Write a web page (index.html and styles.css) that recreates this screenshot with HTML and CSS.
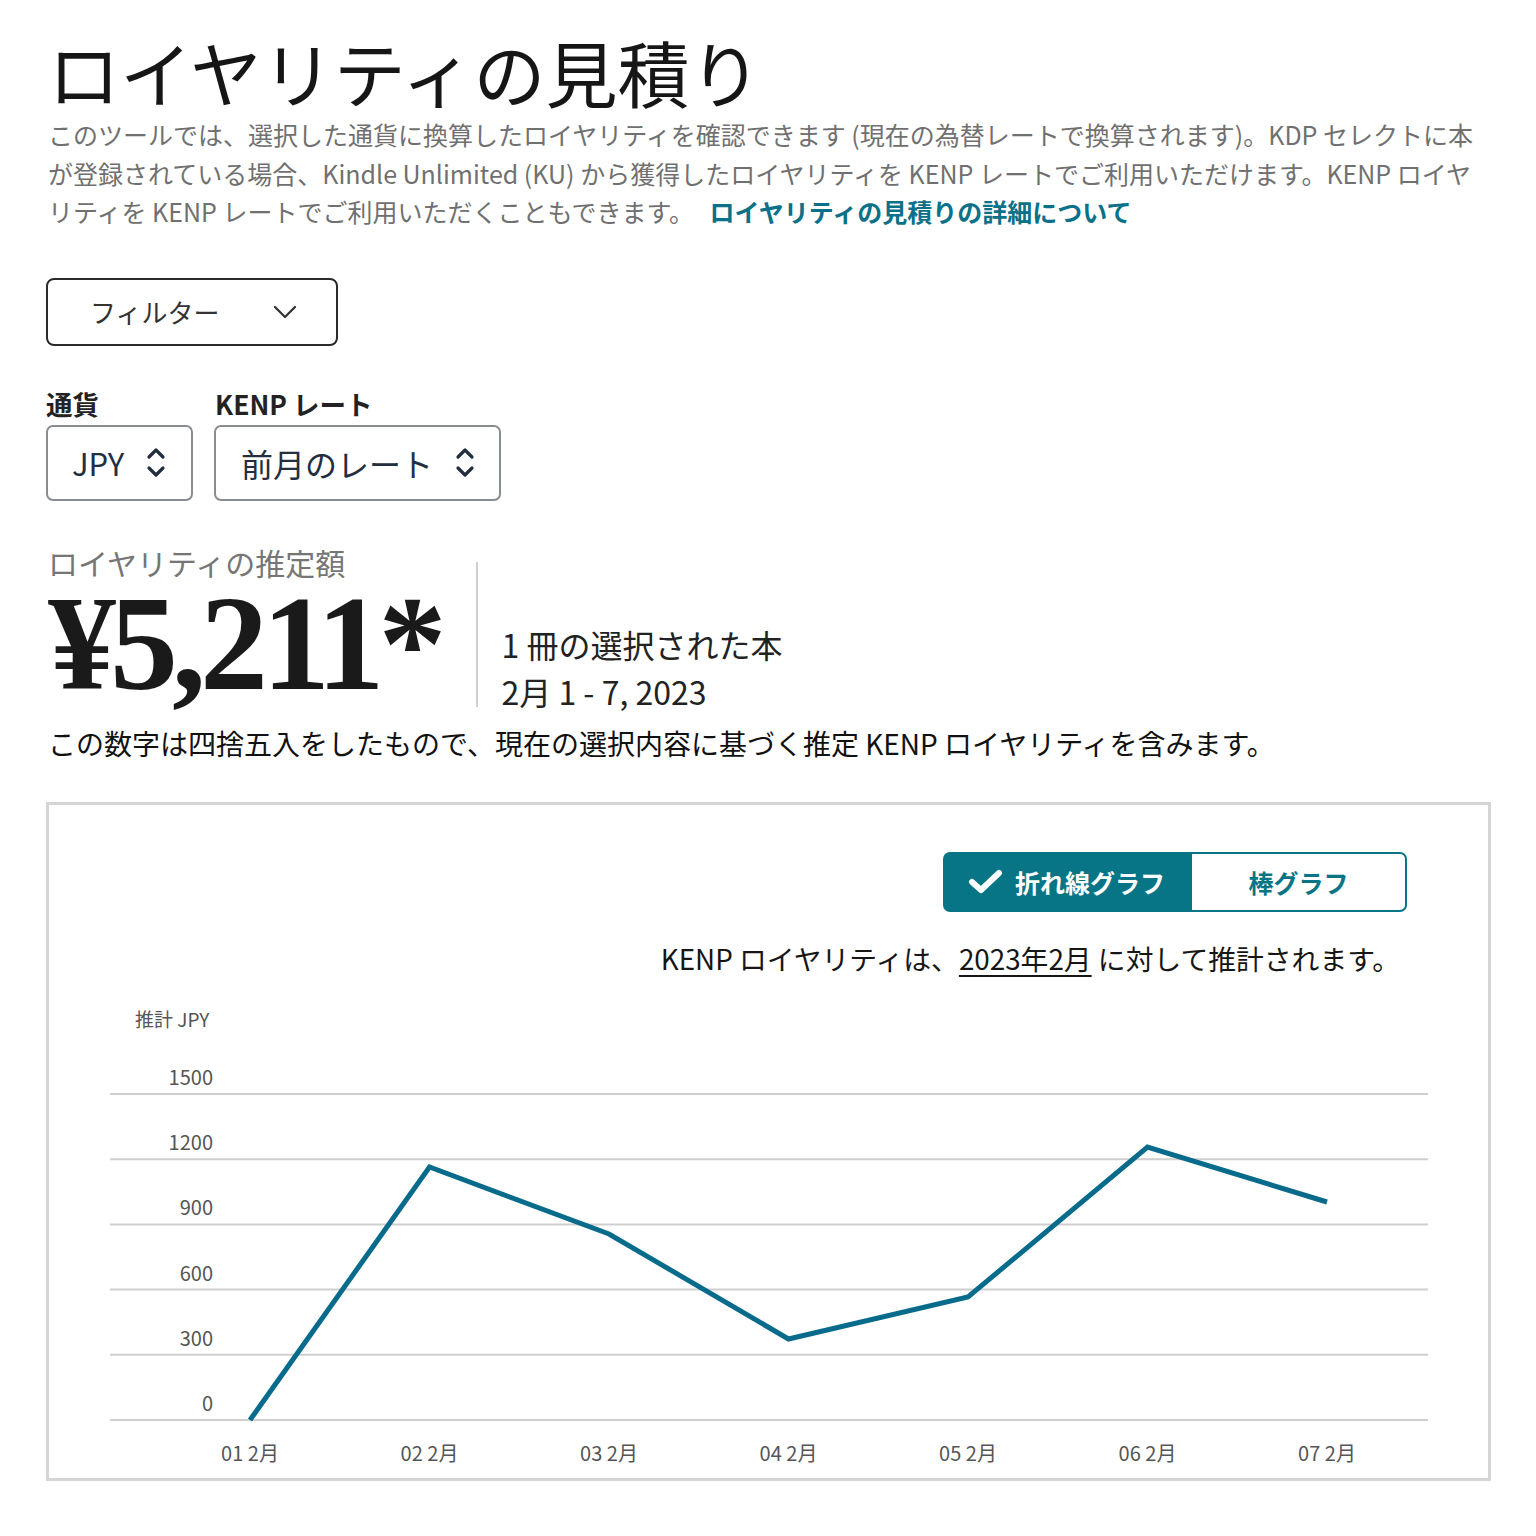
FILE: index.html
```html
<!DOCTYPE html>
<html lang="ja">
<head>
<meta charset="utf-8">
<title>ロイヤリティの見積り</title>
<link rel="stylesheet" href="styles.css">
</head>
<body>
<main class="page">
  <h1 class="title">ロイヤリティの見積り</h1>
  <p class="desc">このツールでは、選択した通貨に換算したロイヤリティを確認できます (現在の為替レートで換算されます)。KDP セレクトに本<br>が登録されている場合、Kindle Unlimited (KU) から獲得したロイヤリティを KENP レートでご利用いただけます。KENP ロイヤ<br>リティを KENP レートでご利用いただくこともできます。 <a class="link" href="#">ロイヤリティの見積りの詳細について</a></p>

  <button class="filter" type="button">
    <span>フィルター</span>
    <svg class="chev" width="24" height="14" viewBox="0 0 24 14"><polyline points="2,2 12,12 22,2" fill="none" stroke="#333" stroke-width="2.3" stroke-linecap="round" stroke-linejoin="round"/></svg>
  </button>

  <div class="selects">
    <div class="field">
      <div class="field-label">通貨</div>
      <div class="select sel-currency">
        <span>JPY</span>
        <svg class="updown" width="20" height="36" viewBox="0 0 20 36"><polyline points="3,12 10,5 17,12" fill="none" stroke="#232f3e" stroke-width="3.2" stroke-linecap="round" stroke-linejoin="round"/><polyline points="3,23 10,30 17,23" fill="none" stroke="#232f3e" stroke-width="3.2" stroke-linecap="round" stroke-linejoin="round"/></svg>
      </div>
    </div>
    <div class="field">
      <div class="field-label">KENP レート</div>
      <div class="select sel-rate">
        <span>前月のレート</span>
        <svg class="updown" width="20" height="36" viewBox="0 0 20 36"><polyline points="3,12 10,5 17,12" fill="none" stroke="#232f3e" stroke-width="3.2" stroke-linecap="round" stroke-linejoin="round"/><polyline points="3,23 10,30 17,23" fill="none" stroke="#232f3e" stroke-width="3.2" stroke-linecap="round" stroke-linejoin="round"/></svg>
      </div>
    </div>
  </div>

  <section class="stat">
    <div class="stat-left">
      <div class="stat-label">ロイヤリティの推定額</div>
      <div class="amount">¥5,211*</div>
    </div>
    <div class="divider"></div>
    <div class="stat-right">
      <div>1 冊の選択された本</div>
      <div>2月 1 - 7, 2023</div>
    </div>
  </section>
  <p class="footnote">この数字は四捨五入をしたもので、現在の選択内容に基づく推定 KENP ロイヤリティを含みます。</p>

  <section class="card">
    <div class="toggle-row">
      <div class="toggle">
        <button class="seg seg-on" type="button">
          <svg width="36" height="26" viewBox="0 0 36 26"><polyline points="4,13 13,21 31,4" fill="none" stroke="#fff" stroke-width="6" stroke-linecap="round" stroke-linejoin="round"/></svg>
          <span>折れ線グラフ</span>
        </button>
        <button class="seg seg-off" type="button">棒グラフ</button>
      </div>
    </div>
    <p class="note">KENP ロイヤリティは、<span class="u">2023年2月</span> に対して推計されます。</p>
    <svg class="chart" width="1439" height="478" viewBox="0 0 1439 478">
      <text class="axis-title" x="86" y="27">推計 JPY</text>
      <g class="grid">
        <line x1="61" x2="1379" y1="94" y2="94"/>
        <line x1="61" x2="1379" y1="159.2" y2="159.2"/>
        <line x1="61" x2="1379" y1="224.4" y2="224.4"/>
        <line x1="61" x2="1379" y1="289.6" y2="289.6"/>
        <line x1="61" x2="1379" y1="354.8" y2="354.8"/>
        <line x1="61" x2="1379" y1="420" y2="420"/>
      </g>
      <g class="ylab">
        <text x="164" y="85">1500</text>
        <text x="164" y="150.2">1200</text>
        <text x="164" y="215.4">900</text>
        <text x="164" y="280.6">600</text>
        <text x="164" y="345.8">300</text>
        <text x="164" y="411">0</text>
      </g>
      <polyline class="series" points="201,420 380.5,167 560,234 739.5,339 919,297 1098.5,147 1278,202"/>
      <g class="xlab">
        <text x="201" y="461">01 2月</text>
        <text x="380.5" y="461">02 2月</text>
        <text x="560" y="461">03 2月</text>
        <text x="739.5" y="461">04 2月</text>
        <text x="919" y="461">05 2月</text>
        <text x="1098.5" y="461">06 2月</text>
        <text x="1278" y="461">07 2月</text>
      </g>
    </svg>
  </section>
</main>
</body>
</html>
```

FILE: styles.css
```css
* { box-sizing: border-box; }
html, body { margin: 0; padding: 0; background: #fff; }
body {
  font-family: "Noto Sans CJK JP", "Noto Sans", sans-serif;
  color: #222;
}
.page {
  padding: 31px 45px 40px 46px;
}
.title {
  margin: 0 0 0 2px;
  font-size: 72px;
  line-height: 80px;
  font-weight: 400;
  color: #161616;
}
.desc {
  margin: 4px 0 0 2px;
  font-size: 25px;
  line-height: 38.5px;
  color: #707070;
  white-space: nowrap;
}
.link {
  margin-left: 10px;
  color: #0b7189;
  font-weight: 700;
  text-decoration: none;
}
.filter {
  margin-top: 47px;
  width: 292px;
  height: 68px;
  border: 2px solid #2b2b2b;
  border-radius: 8px;
  background: #fff;
  display: flex;
  align-items: center;
  justify-content: space-between;
  padding: 0 39px 0 42px;
  font-family: inherit;
  font-size: 26px;
  color: #333;
}
.chev { display: block; }
.selects {
  display: flex;
  gap: 21px;
  margin-top: 43px;
}
.field-label {
  font-size: 26.5px;
  line-height: 30px;
  font-weight: 700;
  color: #222;
  margin-bottom: 6px;
}
.selects .field:nth-child(2) .field-label { padding-left: 1px; }
.select {
  height: 76px;
  border: 2px solid #8a8d90;
  border-radius: 7px;
  display: flex;
  align-items: center;
  justify-content: space-between;
  padding: 0 25px 0 24px;
  font-size: 31px;
  color: #232f3e;
}
.sel-currency { width: 147px; }
.sel-rate { width: 287px; padding-left: 25px; padding-right: 24px; }
.sel-rate span { font-size: 32px; }
.updown { display: block; }
.stat {
  display: flex;
  align-items: flex-start;
  margin-top: 43px;
}
.stat-left { padding-left: 2px; }
.stat-label {
  font-size: 30px;
  line-height: 36px;
  color: #767676;
}
.amount {
  margin-top: 8px;
  font-family: "Liberation Serif", "Times New Roman", serif;
  font-weight: 700;
  font-size: 136px;
  line-height: 110px;
  letter-spacing: -6px;
  color: #1a1a1a;
}
.divider {
  width: 2px;
  height: 145px;
  background: #cfcfcf;
  margin-top: 18px;
  margin-left: 35px;
}
.stat-right {
  padding-left: 24px;
  margin-top: 77px;
  font-size: 32px;
  line-height: 47px;
  color: #222;
}
.footnote {
  margin: 8px 0 0 2px;
  font-size: 28px;
  line-height: 40px;
  color: #111;
}
.card {
  margin-top: 39px;
  width: 1445px;
  border: 3px solid #d5d5d5;
  padding-top: 47px;
}
.toggle-row {
  display: flex;
  justify-content: flex-end;
  padding-right: 81px;
}
.toggle {
  display: flex;
  height: 60px;
}
.seg {
  font-family: inherit;
  font-size: 25px;
  font-weight: 700;
  height: 60px;
  display: flex;
  align-items: center;
  margin: 0;
}
.seg-on {
  width: 249px;
  background: #087586;
  color: #fff;
  border: 2px solid #087586;
  border-radius: 7px 0 0 7px;
  padding: 0 0 0 23px;
  gap: 11px;
}
.seg-off {
  width: 215px;
  background: #fff;
  color: #087586;
  border: 2px solid #087586;
  border-left: none;
  border-radius: 0 7px 7px 0;
  justify-content: center;
}
.note {
  margin: 28px 0 0 0;
  padding-right: 88px;
  text-align: right;
  font-size: 27.8px;
  line-height: 36px;
  color: #161616;
}
.u { text-decoration: underline; text-underline-offset: 5px; }
.chart {
  display: block;
  margin-top: 24px;
}
.grid line { stroke: #cfcfcf; stroke-width: 2; }
.series { fill: none; stroke: #086b8c; stroke-width: 5; stroke-linejoin: miter; }
.ylab text {
  text-anchor: end;
  font-size: 20px;
  fill: #555;
}
.xlab text {
  text-anchor: middle;
  font-size: 20px;
  fill: #555;
}
.axis-title {
  font-size: 19px;
  fill: #555;
}
```
